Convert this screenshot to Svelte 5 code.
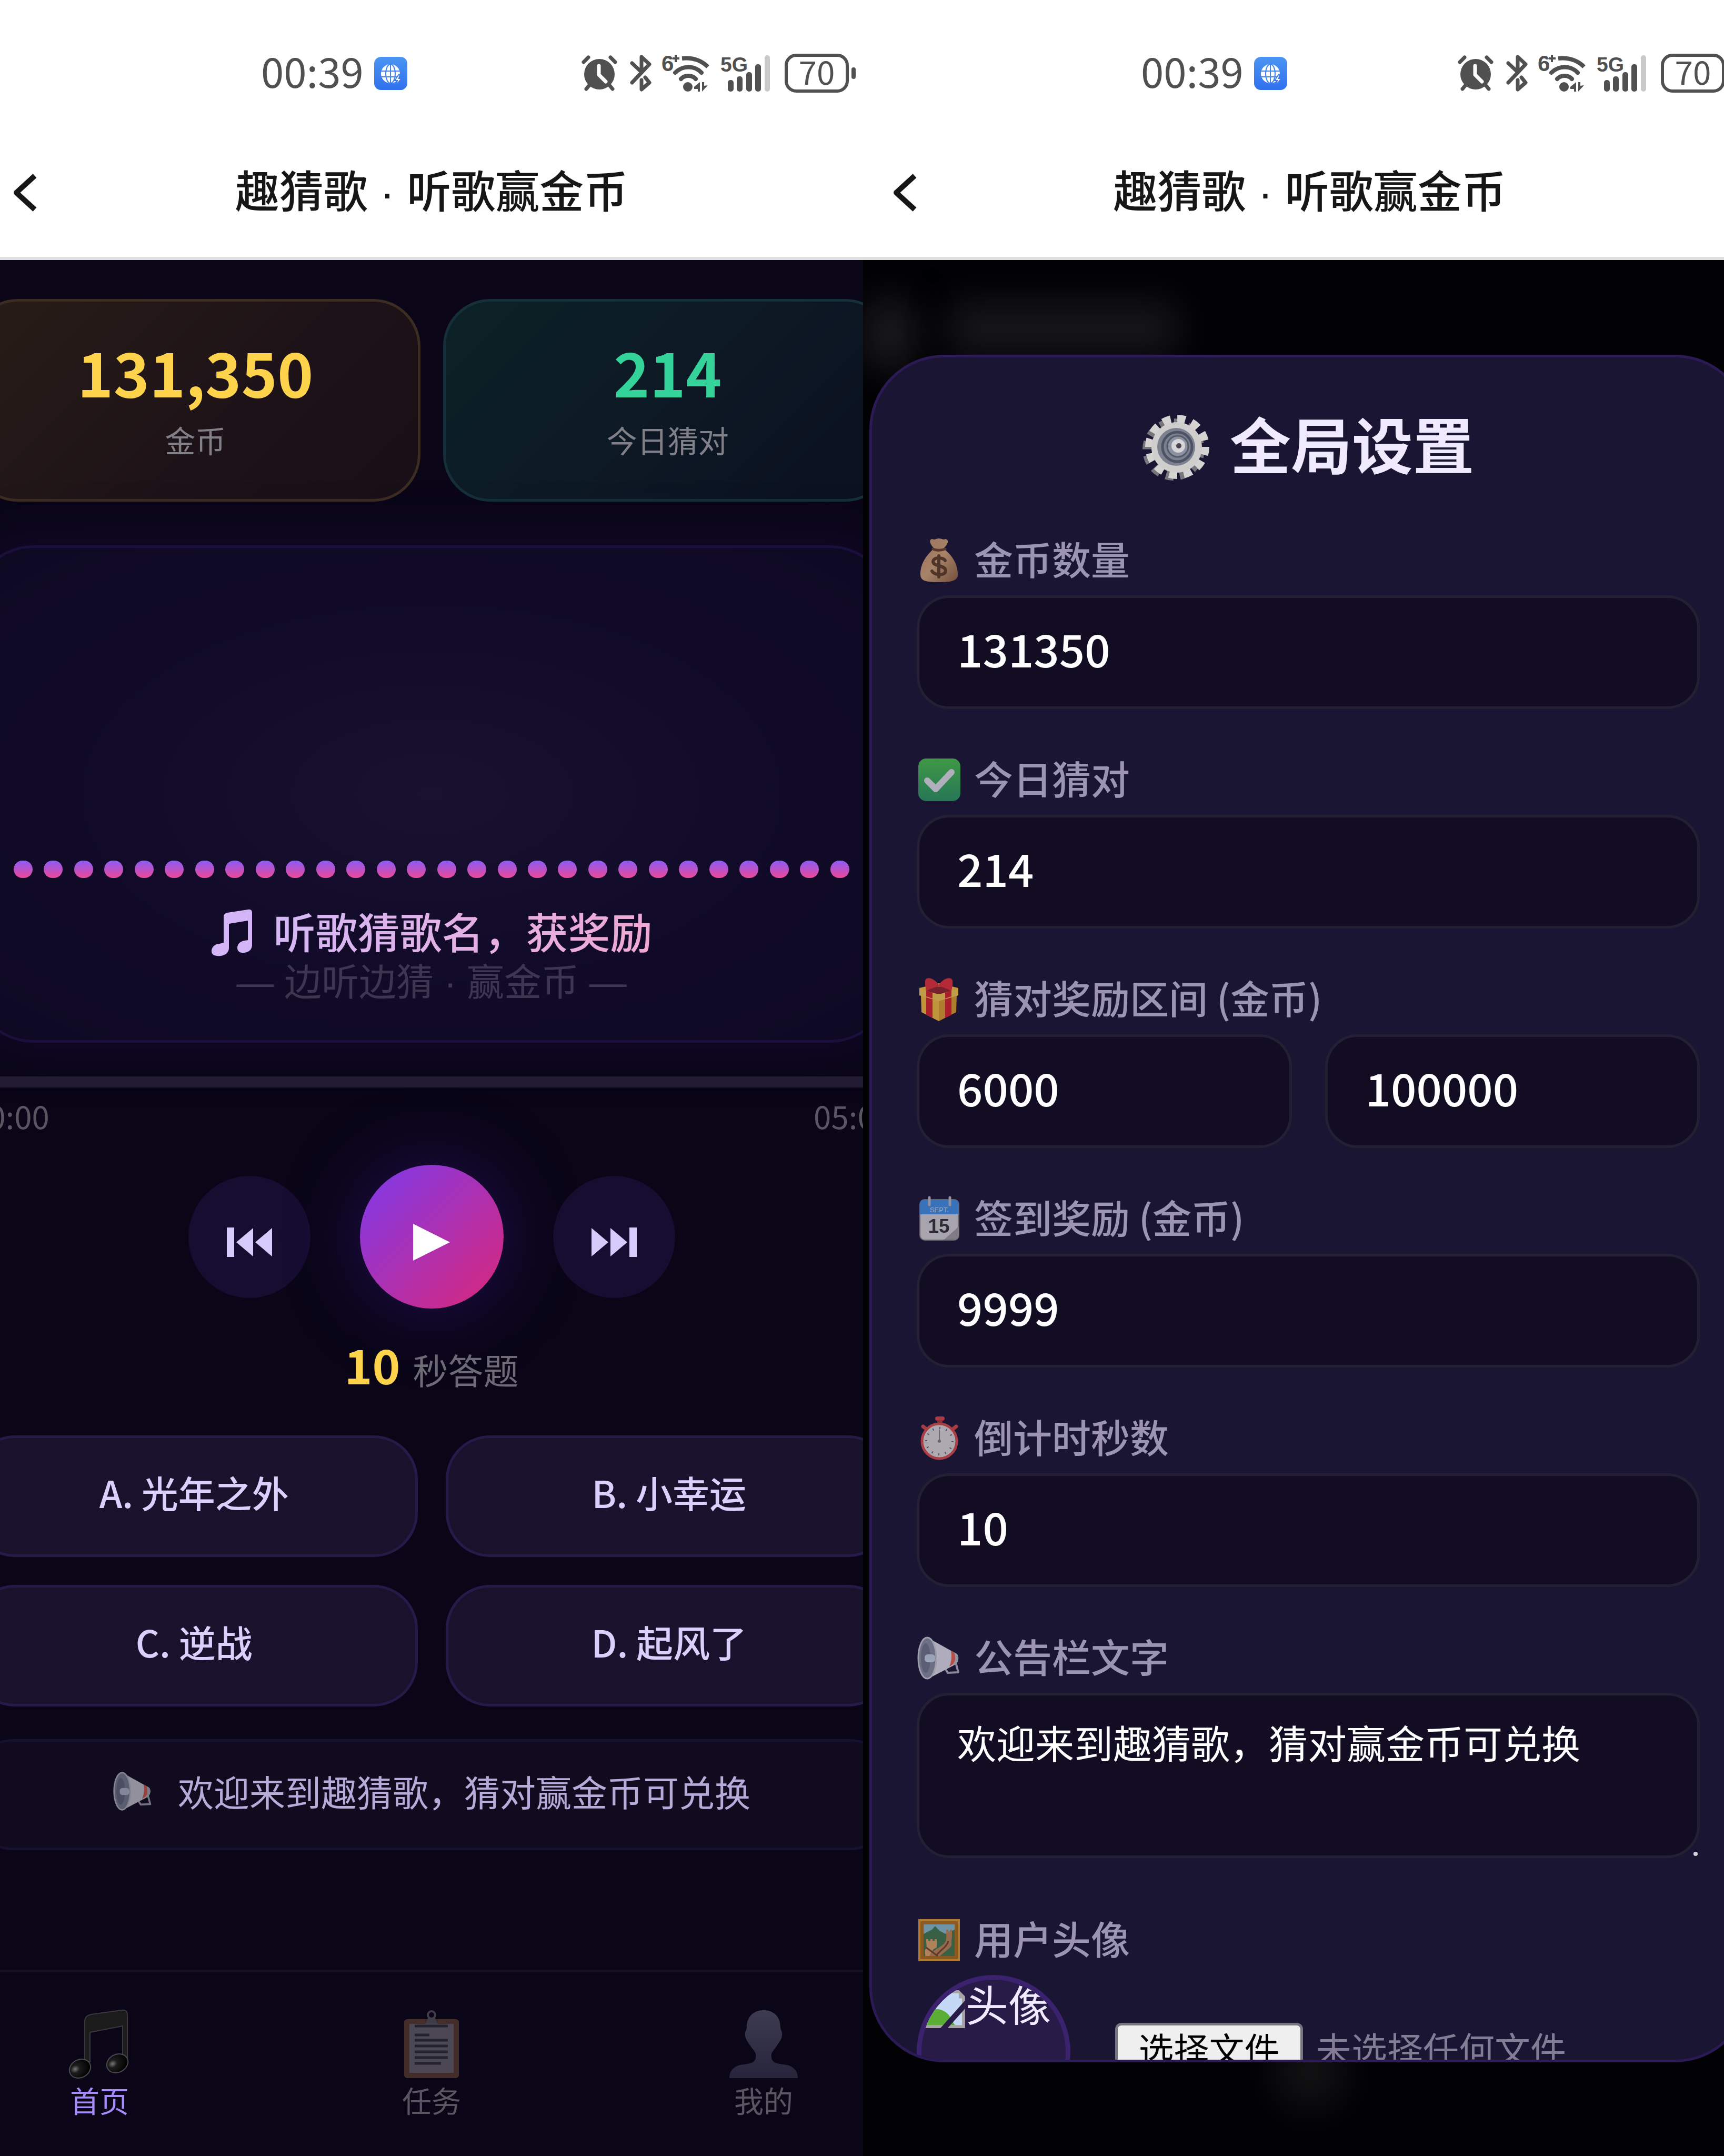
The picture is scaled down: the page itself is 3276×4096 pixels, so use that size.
<script>
  const options = ['A. 光年之外', 'B. 小幸运', 'C. 逆战', 'D. 起风了'];
  const dots = Array.from({ length: 28 });
  const tabs = [
    { id: 'home', label: '首页' },
    { id: 'task', label: '任务' },
    { id: 'me', label: '我的' }
  ];
  let active = $state('home');
  let coins = $state('131350');
  let guessed = $state('214');
  let rewardMin = $state('6000');
  let rewardMax = $state('100000');
  let signReward = $state('9999');
  let seconds = $state('10');
  let notice = $state('欢迎来到趣猜歌，猜对赢金币可兑换');
</script>

{#snippet phoneTop()}
  <div class="status">
    <span class="clock">00:39</span>
    <svg class="globe" viewBox="0 0 63 63" aria-hidden="true">
      <defs><linearGradient id="gl" x1="0" y1="0" x2="0" y2="1"><stop offset="0" stop-color="#4c95f3" /><stop offset="1" stop-color="#2f70ee" /></linearGradient></defs>
      <rect width="63" height="63" rx="13" fill="url(#gl)" />
      <circle cx="31" cy="32" r="18" fill="#fff" />
      <g fill="none" stroke="#3f83f0" stroke-width="2"><ellipse cx="31" cy="32" rx="9" ry="18" /><path d="M13 27h36M13 38h36M31 14v36" /></g>
      <path d="M47 33l-8 12h5l-2 8 10-12h-5l2-8z" fill="#fff" stroke="#3a7cf0" stroke-width="2" />
    </svg>
    <div class="signals">
      <svg class="alarm" viewBox="0 0 68 68" aria-hidden="true">
        <path d="M4 13L13 4M64 13L55 4" stroke="#505050" stroke-width="7" stroke-linecap="round" />
        <path d="M14 58l-5 6M54 58l5 6" stroke="#505050" stroke-width="7" stroke-linecap="round" />
        <circle cx="34" cy="36" r="29" fill="#505050" />
        <path d="M33 20v17l13 13" fill="none" stroke="#fff" stroke-width="7" stroke-linecap="round" stroke-linejoin="round" />
      </svg>
      <svg class="bt" viewBox="0 0 42 70" aria-hidden="true">
        <path d="M4 16l18 17M4 53L37 18 22 4v30M29 43l8 10-15 13V48" fill="none" stroke="#505050" stroke-width="7" stroke-linejoin="round" stroke-linecap="round" />
      </svg>
      <svg class="wifi" viewBox="0 0 92 74" aria-hidden="true">
        <text x="-2" y="33" font-size="42" font-weight="700" fill="#505050">6</text>
        <path d="M19 9h13M25 2v14" stroke="#505050" stroke-width="4" />
        <g fill="none" stroke="#505050" stroke-width="8"><path d="M37 9C58 7 74 13 86 25" stroke-linejoin="round" /><g stroke-linecap="round"><path d="M24 36C38 22 61 22 74 36" /><path d="M35 48C42 40 56 40 63 48" /></g></g>
        <circle cx="48" cy="63" r="9" fill="#505050" />
        <path d="M71 54v18h-4v-5h-7v-4zM75 54v18l11-12-7 1v-7z" fill="#505050" />
      </svg>
      <svg class="cell" viewBox="0 0 96 70" aria-hidden="true">
        <text x="-1" y="32" font-size="39" font-weight="700" fill="#505050">5G</text>
        <g fill="#505050"><rect x="13" y="48" width="11" height="22" rx="5" /><rect x="30" y="41" width="11" height="29" rx="5" /><rect x="48" y="33" width="11" height="37" rx="5" /><rect x="65" y="18" width="11" height="52" rx="5" /></g>
        <rect x="83" y="1" width="10" height="69" rx="5" fill="#c9c9c9" />
      </svg>
      <span class="battery">70</span>
      <span class="nub"></span>
      <svg class="bolt" viewBox="0 0 30 64" aria-hidden="true"><path d="M18 12L2 36h12l-4 22 18-28H16z" fill="#505050" /></svg>
    </div>
  </div>
  <header>
    <button class="back" aria-label="返回"><svg viewBox="0 0 48 76" aria-hidden="true"><path d="M42 6L7 38l35 32" fill="none" stroke="#161616" stroke-width="10" stroke-linejoin="round" /></svg></button>
    <h1>趣猜歌 · 听歌赢金币</h1>
  </header>
{/snippet}

{#snippet horn()}
  <svg viewBox="0 0 84 84" aria-hidden="true">
    <path d="M58 46l14-3 7 26-20 1-6-10" fill="none" stroke="#a9a8b5" stroke-width="4" stroke-linejoin="round" />
    <path d="M22 4L76 34c5 5 4 14-2 20L24 80z" fill="#d9d8e2" />
    <path d="M65 28l7 4c3 8 2 15-3 22l-7 4c4-9 5-20 3-30z" fill="#e0604e" />
    <path d="M71 31l5 3c5 5 4 14-2 20l-5 2c5-7 5-17 2-25z" fill="#b7b6c2" />
    <ellipse cx="20" cy="42" rx="17" ry="39" fill="#83899c" stroke="#c3c5d0" stroke-width="3" />
    <ellipse cx="17" cy="42" rx="9" ry="28" fill="#6d7388" />
    <rect x="15" y="35" width="20" height="15" rx="6" fill="#c0cbdc" />
  </svg>
{/snippet}

<main>
  <section class="phone left">
    <div class="top">{@render phoneTop()}</div>
    <div class="page">
      <div class="stats">
        <div class="stat gold"><strong>131,350</strong><span>金币</span></div>
        <div class="stat green"><strong>214</strong><span>今日猜对</span></div>
      </div>

      <div class="hero">
        <div class="wave">{#each dots as _}<i></i>{/each}</div>
        <div class="headline">
          <svg viewBox="0 0 78 88" aria-hidden="true"><path d="M24 14C24 9 27 7 31 6L70 0c5-1 8 1 8 6v61c0 9-6 14-15 15-8 1-13-3-13-9 0-8 6-13 14-14l6-1V21L34 27v46c0 8-6 14-16 15C7 89 1 86 1 79c0-8 7-14 15-14l8-2z" fill="#d4b5f7" /></svg>
          <h2>听歌猜歌名，获奖励</h2>
        </div>
        <p>— 边听边猜 · 赢金币 —</p>
      </div>

      <div class="progress" role="progressbar" aria-label="播放进度" aria-valuenow="0"></div>
      <div class="times"><span>00:00</span><span>05:00</span></div>

      <div class="controls">
        <button class="side" aria-label="上一首"><svg viewBox="0 0 86 56" aria-hidden="true"><path d="M0 0h14v56H0zM50 1v54L18 28zM86 1v54L54 28z" fill="#d6ccfb" /></svg></button>
        <button class="play" aria-label="播放"><svg viewBox="0 0 70 70" aria-hidden="true"><path d="M0 0l70 35L0 70z" fill="#fff" /></svg></button>
        <button class="side" aria-label="下一首"><svg viewBox="0 0 86 56" aria-hidden="true"><path d="M72 0h14v56H72zM36 1v54l32-27zM0 1v54l32-27z" fill="#d6ccfb" /></svg></button>
      </div>

      <p class="count"><b>10</b><span>秒答题</span></p>

      <div class="options">
        {#each options as option}<button>{option}</button>{/each}
      </div>

      <div class="notice">{@render horn()}<span>欢迎来到趣猜歌，猜对赢金币可兑换</span></div>
    </div>

    <nav>
      {#each tabs as tab}
        <button class:active={active === tab.id} onclick={() => (active = tab.id)}>
          {#if tab.id === 'home'}
            <svg viewBox="0 0 130 130" aria-hidden="true">
              <defs><radialGradient id="nh" cx=".3" cy=".4" r=".7"><stop offset="0" stop-color="#777" /><stop offset=".3" stop-color="#1c1c1c" /><stop offset="1" stop-color="#000" /></radialGradient></defs>
              <path d="M37 20c1-8 5-10 12-12l58-8c8-1 11 2 11 9v81h-9V30L47 42v56h-10z" fill="#1c1b1c" stroke="#39383c" stroke-width="2" />
              <ellipse cx="28" cy="111" rx="21" ry="17" transform="rotate(-28 28 111)" fill="url(#nh)" stroke="#4a4a4d" stroke-width="2" />
              <ellipse cx="99" cy="101" rx="21" ry="17" transform="rotate(-28 99 101)" fill="url(#nh)" stroke="#4a4a4d" stroke-width="2" />
            </svg>
          {:else if tab.id === 'task'}
            <svg viewBox="0 0 130 130" aria-hidden="true">
              <rect x="13" y="17" width="104" height="112" rx="6" fill="#432d2a" />
              <path d="M23 26h84v93H23z" fill="#4b4755" />
              <circle cx="65" cy="9" r="7" fill="none" stroke="#3f3d49" stroke-width="4" />
              <path d="M58 15h14l4 11H54z" fill="#3f3d49" />
              <path d="M33 30h63M33 47h28M33 57h63M33 68h63M33 79h63M33 90h63M33 101h50" stroke="#252230" stroke-width="5" />
            </svg>
          {:else}
            <svg viewBox="0 0 130 130" aria-hidden="true">
              <defs><linearGradient id="me" x1="0" y1="0" x2="0" y2="1"><stop offset="0" stop-color="#3d3b50" /><stop offset="1" stop-color="#27253c" /></linearGradient></defs>
              <path d="M65 0c20 0 32 13 32 33 0 4 4 7 3 15-1 9-6 13-10 20-6 9-12 12-10 22 2 14 18 11 33 15 13 5 17 14 17 24H0c0-10 4-19 17-24 15-4 31-1 33-15 2-10-4-13-10-22-4-7-9-11-10-20-1-8 3-11 3-15C33 13 45 0 65 0z" fill="url(#me)" />
            </svg>
          {/if}
          <span>{tab.label}</span>
        </button>
      {/each}
    </nav>
  </section>

  <section class="phone right">
    {@render phoneTop()}
    <div class="overlay">
      <i class="haze a"></i><i class="haze b"></i><i class="haze c"></i>
      <form class="panel">
        <h2>
          <svg viewBox="0 0 127 127" aria-hidden="true">
            <circle cx="59" cy="67" r="49" fill="none" stroke="#77767c" stroke-width="20" stroke-dasharray="14 11.7" />
            <circle cx="66" cy="62" r="52" fill="none" stroke="#d4d3d2" stroke-width="18" stroke-dasharray="15 12.2" />
            <circle cx="65" cy="63" r="48" fill="#cfcecd" />
            <circle cx="64" cy="62" r="36" fill="#7c8190" />
            <circle cx="66" cy="62" r="28" fill="none" stroke="#4d5364" stroke-width="5" />
            <circle cx="67" cy="61" r="20" fill="#8d92a2" stroke="#555a69" stroke-width="3" />
            <circle cx="68" cy="60" r="13" fill="#d6d6d8" />
            <circle cx="69" cy="60" r="5" fill="#45454d" />
          </svg>
          全局设置
        </h2>

        <div class="field">
          <label for="coins">
            <svg viewBox="0 0 84 84" aria-hidden="true">
              <defs><linearGradient id="bag" x1="0" y1="0" x2="1" y2="1"><stop offset="0" stop-color="#bd8d66" /><stop offset=".5" stop-color="#cfa278" /><stop offset="1" stop-color="#8c603e" /></linearGradient></defs>
              <path d="M33 19C24 9 23 2 29 1c6 2 8-1 13-1s8 3 13 1c7 2 5 9-4 18 15 12 27 28 27 49 0 12-10 15-36 15S7 80 7 68c0-21 12-37 26-49z" fill="url(#bag)" />
              <path d="M31 20c7 3 15 3 23 0" stroke="#68422b" stroke-width="5" fill="none" stroke-linecap="round" />
              <path d="M54 42c-3-6-22-8-23 2 0 10 24 6 24 17 0 11-22 9-26 1M42 33v40" stroke="#5e3d25" stroke-width="6" fill="none" stroke-linecap="round" />
            </svg>
            金币数量
          </label>
          <input id="coins" type="text" inputmode="numeric" bind:value={coins} />
        </div>

        <div class="field">
          <label for="guessed">
            <svg viewBox="0 0 84 84" aria-hidden="true">
              <defs><linearGradient id="ok" x1="0" y1="0" x2="0" y2="1"><stop offset="0" stop-color="#4bbd4b" /><stop offset="1" stop-color="#2a9360" /></linearGradient></defs>
              <rect x="3" y="1" width="80" height="81" rx="15" fill="url(#ok)" />
              <path d="M20 43l16 16 30-32" stroke="#dbdbe3" stroke-width="12" fill="none" stroke-linecap="round" stroke-linejoin="round" />
            </svg>
            今日猜对
          </label>
          <input id="guessed" type="text" inputmode="numeric" bind:value={guessed} />
        </div>

        <div class="field">
          <label for="rmin">
            <svg viewBox="0 0 84 84" aria-hidden="true">
              <path d="M5 20l37-9 37 9v14H5z" fill="#f0bd42" />
              <path d="M8 33l34 9v41L9 66z" fill="#eeb83e" />
              <path d="M76 33l-34 9v41l33-17z" fill="#d99b2d" />
              <path d="M18 36l12 4v37l-12-6zM54 40l12-4v35l-12 6z" fill="#d5222c" />
              <path d="M42 14C32 0 18-2 16 6c-1 8 1 13 2 20 8-1 16-4 24-10 8 6 16 9 24 10 1-7 3-12 2-20-2-8-16-6-26 8z" fill="#df3038" />
              <path d="M20 25c7-4 14-7 22-8 8 1 15 4 22 8l-2 6H22z" fill="#92242d" />
              <path d="M5 22l37 10 37-10v12L42 45 5 34z" fill="#f2c450" />
              <path d="M18 25l12 4v11l-12-4zM54 29l12-4v11l-12 4z" fill="#d5222c" />
            </svg>
            猜对奖励区间 (金币)
          </label>
          <div class="pair">
            <input id="rmin" type="text" inputmode="numeric" aria-label="最低奖励" bind:value={rewardMin} />
            <input type="text" inputmode="numeric" aria-label="最高奖励" bind:value={rewardMax} />
          </div>
        </div>

        <div class="field">
          <label for="sign">
            <svg viewBox="0 0 84 84" aria-hidden="true">
              <rect x="6" y="5" width="74" height="77" rx="9" fill="#cfcdd1" stroke="#79757b" stroke-width="2" />
              <path d="M6 33V14q0-9 9-9h56q9 0 9 9v19z" fill="#3f8be0" />
              <text x="43" y="29" text-anchor="middle" font-size="13" fill="#c3d6ee">SEPT.</text>
              <path d="M80 56L52 81h19q9 0 9-9z" fill="#9c9a9f" />
              <text x="42" y="68" text-anchor="middle" font-size="37" font-weight="700" fill="#333">15</text>
              <path d="M24 1v14M63 1v14" stroke="#b6b6bd" stroke-width="5" stroke-linecap="round" />
            </svg>
            签到奖励 (金币)
          </label>
          <input id="sign" type="text" inputmode="numeric" bind:value={signReward} />
        </div>

        <div class="field">
          <label for="secs">
            <svg viewBox="0 0 84 84" aria-hidden="true">
              <rect x="35" y="0" width="18" height="8" rx="4" fill="#d94444" /><path d="M39 7h10v8H39z" fill="#a33a3d" />
              <path d="M12 19l9 7M75 19l-9 7" stroke="#cf4748" stroke-width="7" stroke-linecap="round" />
              <circle cx="43" cy="47" r="33" fill="#d8d2d4" stroke="#d34a4b" stroke-width="5" />
              <circle cx="43" cy="47" r="25" fill="none" stroke="#67616c" stroke-width="4" stroke-dasharray="2 11" />
              <path d="M43 25v24" stroke="#817b86" stroke-width="2" />
              <circle cx="43" cy="47" r="3" fill="#817b86" />
            </svg>
            倒计时秒数
          </label>
          <input id="secs" type="text" inputmode="numeric" bind:value={seconds} />
        </div>

        <div class="field">
          <label for="notice">{@render horn()}公告栏文字</label>
          <div class="area">
            <textarea id="notice" bind:value={notice}></textarea>
            <i class="grip"></i>
          </div>
        </div>

        <div class="field">
          <label for="avatar">
            <svg viewBox="0 0 84 84" aria-hidden="true">
              <rect x="3" y="2" width="79" height="80" fill="#a86d1c" />
              <rect x="5" y="4" width="75" height="76" fill="none" stroke="#dc9a30" stroke-width="4" />
              <rect x="13" y="12" width="59" height="60" fill="#86b9c8" />
              <path d="M13 30l16-8 6-7 8 9 12 6 17-8v50H13z" fill="#42764a" />
              <path d="M56 22h4v3h3v-3h4v14c-3 14 3 14-6 22L44 72H24c6-12 24-17 30-26 3-5 2-10 2-24z" fill="#b98254" />
              <path d="M18 44v-4h4v3h4v-3h4v3h4v-3h4v16l-6 3-8 13h-8V60l3-3z" fill="#dba064" />
              <path d="M18 56l22 16M60 44C58 54 46 60 38 70" fill="none" stroke="#75422c" stroke-width="3" />
            </svg>
            用户头像
          </label>
          <div class="upload">
            <div class="avatar" role="img" aria-label="头像">
              <svg viewBox="0 0 84 74" aria-hidden="true"><path d="M0 0h72l12 12v62H0z" fill="#a7a3a6" /><path d="M6 6h66v10h6v52H6z" fill="#c5d8f5" /><path d="M6 68V48c14-15 32-14 46 0l12 20z" fill="#5aae35" /><path d="M84 20L36 74h14l34-38z" fill="#291b47" /></svg>
              <span>头像</span>
            </div>
            <label class="file" for="avatar">选择文件</label>
            <input id="avatar" class="hidden" type="file" />
            <span class="none">未选择任何文件</span>
          </div>
        </div>
      </form>
    </div>
  </section>
</main>

<style>
  :global(body) { margin: 0; background: #020205; }
  * { box-sizing: border-box; }
  main { display: grid; grid-template-columns: 1640fr 1636fr; height: 100vh; overflow: hidden; font-family: "Noto Sans CJK SC", "Noto Sans", sans-serif; }
  h1, h2, p { margin: 0; }
  button, input, textarea { font: inherit; color: inherit; border: 0; background: none; padding: 0; margin: 0; outline: none; }
  svg { display: block; flex: none; overflow: visible; }
  .phone { min-width: 0; height: 100vh; display: flex; flex-direction: column; }
  .left { overflow: hidden; background: #0a0618; }
  .left .top { margin: 0 -32px; }
  .right { margin-right: -61px; background: #020205; }

  .status { height: 278px; padding-left: 528px; background: #fff; display: flex; align-items: center; color: #505050; }
  .clock { font-size: 78px; line-height: 90px; margin-bottom: 12px; }
  .globe { width: 63px; height: 63px; margin-left: 20px; }
  .signals { display: flex; align-items: center; margin-left: auto; }
  .alarm { width: 68px; height: 68px; margin-right: 24px; }
  .bt { width: 42px; height: 70px; margin-right: 20px; }
  .wifi { width: 92px; height: 74px; margin-right: 19px; }
  .cell { width: 96px; height: 70px; margin-right: 25px; }
  .wifi text, .cell text { font-family: "Liberation Sans", sans-serif; }
  .battery { width: 122px; height: 74px; border: 6px solid #505050; border-radius: 22px; font-size: 62px; line-height: 52px; text-align: center; }
  .nub { width: 8px; height: 22px; margin: 0 14px 0 5px; border-radius: 4px; background: #505050; }
  .bolt { width: 30px; height: 64px; margin-right: 2px; }
  header { height: 216px; border-bottom: 6px solid #e0e0e0; background: #fff; display: grid; grid-template-columns: 140px 1fr 140px; align-items: center; padding-bottom: 34px; }
  .back { padding-left: 56px; }
  .back svg { width: 48px; height: 76px; }
  h1 { font-family: "Liberation Sans", "Noto Sans CJK SC", sans-serif; font-size: 84px; line-height: 110px; font-weight: 500; text-align: center; color: #161616; white-space: nowrap; }

  .page { margin: 0 -56px; padding-top: 74px; display: flex; flex-direction: column; }
  .stats { display: grid; grid-template-columns: 1fr 1fr; gap: 43px; }
  .stat { border: 5px solid; border-radius: 90px; padding: 61px 0 73px; display: flex; flex-direction: column; align-items: center; gap: 21px; }
  .stat strong { font-size: 116px; line-height: 140px; font-weight: 700; }
  .stat span { font-size: 58px; line-height: 80px; color: #817f88; }
  .gold { border-color: #3d2c22; background: linear-gradient(135deg, #291d18, #1d1217 60%, #190f16); }
  .gold strong { color: #fdd34c; }
  .green { border-color: #15303a; background: linear-gradient(135deg, #0c2226, #0d1724 60%, #0a1020); }
  .green strong { color: #34d399; }

  .hero { margin-top: 83px; border: 5px solid #1b103b; border-radius: 120px; padding: 0 77px 64px; display: flex; flex-direction: column; background: radial-gradient(ellipse at 50% 50%, #18112f, #110b29 50%, #0e0923); box-shadow: 0 0 100px #160a2e; }
  .wave { height: 627px; display: flex; justify-content: space-between; align-items: flex-end; }
  .wave i { width: 36px; height: 33px; border-radius: 18px; background: linear-gradient(#8b5cf6, #ec4899); }
  .headline { margin-top: 44px; display: flex; justify-content: center; align-items: center; gap: 41px; }
  .headline svg { width: 78px; height: 88px; margin-top: 10px; }
  .headline h2 { font-size: 80px; line-height: 110px; font-weight: 500; background: linear-gradient(90deg, #d5b8f7, #f0a8d2); background-clip: text; color: transparent; }
  .hero p { font-family: "Liberation Sans", "Noto Sans CJK SC", sans-serif; font-size: 71px; line-height: 90px; text-align: center; color: #3d3650; }

  .progress { margin-top: 64px; height: 21px; border-radius: 10px; background: #221c33; }
  .times { margin-top: 13px; display: flex; justify-content: space-between; font-size: 60px; line-height: 80px; color: #595661; }
  .controls { margin-top: 54px; display: flex; justify-content: center; align-items: center; gap: 94px; }
  .controls button { border-radius: 50%; display: grid; place-items: center; padding-top: 20px; }
  .side { width: 232px; height: 232px; background: #170d31; }
  .side svg { width: 86px; height: 56px; }
  .play { width: 273px; height: 273px; background: linear-gradient(135deg, #7c3aed, #db2777); box-shadow: 0 0 130px #220d50; }
  .play svg { width: 70px; height: 70px; }
  .count { margin-top: 40px; display: flex; justify-content: center; align-items: baseline; gap: 24px; line-height: 130px; color: #6e6b77; font-size: 67px; }
  .count b { font-size: 90px; color: #fdd34c; }
  .options { margin-top: 61px; display: grid; grid-template-columns: 1fr 1fr; gap: 53px; }
  .options button { border: 5px solid #251a48; border-radius: 84px; padding: 58px 0 73px; background: #19122d; color: #d9d0fb; font-size: 70px; line-height: 90px; font-weight: 500; }
  .notice { margin-top: 62px; border: 5px solid #171130; border-radius: 80px; padding: 49px 0 62px; display: flex; justify-content: center; align-items: center; gap: 48px; background: #100b1f; color: #b6abd9; font-size: 68px; line-height: 90px; }
  .notice svg { width: 76px; height: 76px; opacity: 0.65; }

  nav { margin-top: auto; border-top: 5px solid #15101f; padding: 72px 124px 67px; display: flex; justify-content: space-between; }
  nav button { display: flex; flex-direction: column; align-items: center; font-size: 56px; line-height: 80px; color: #595661; }
  nav svg { width: 130px; height: 130px; }
  nav .active { color: #a78bfa; }

  .overlay { position: relative; flex: 1; min-height: 0; padding: 180px 12px 178px; overflow: hidden; }
  .haze { position: absolute; border-radius: 50%; filter: blur(34px); background: #1c1c1f; }
  .a { left: 0; top: 70px; width: 100px; height: 140px; }
  .b { left: 160px; top: 80px; width: 440px; height: 100px; border-radius: 30px; background: #17171b; }
  .c { left: 780px; bottom: 90px; width: 140px; height: 140px; background: #121214; }
  .panel { position: relative; height: 100%; overflow: hidden; border: 5px solid #2c1a56; border-radius: 142px; padding: 86px 90px 0 85px; background: #1b1534; }
  .panel h2 { display: flex; justify-content: center; align-items: center; gap: 39px; margin-bottom: 92px; font-size: 116px; line-height: 150px; font-weight: 700; color: #f0eaff; }
  .panel h2 svg { width: 127px; height: 127px; margin-top: 20px; }
  .field { margin-bottom: 77px; }
  .field > label { display: flex; align-items: center; gap: 25px; margin-bottom: 18px; font-size: 74px; line-height: 106px; font-weight: 500; color: #9c94b3; white-space: nowrap; }
  .field > label svg { width: 84px; height: 84px; margin-top: 10px; opacity: 0.78; }
  .field > label text { font-family: "Liberation Sans", sans-serif; }
  .field input[type='text'] { display: block; width: 100%; border: 5px solid #242034; border-radius: 62px; padding: 41px 72px 59px; background: #120d22; color: #fff; font-size: 85px; line-height: 106px; font-weight: 500; height: 216px; }
  .pair { display: grid; grid-template-columns: 1fr 1fr; gap: 63px; }
  .area { position: relative; margin-bottom: 98px; }
  textarea { display: block; width: 100%; height: 314px; border: 5px solid #242034 !important; border-radius: 62px; padding: 40px 72px; background: #120d22; color: #fff; font-size: 74px; line-height: 96px; resize: none; overflow: hidden; }
  .grip { position: absolute; right: 4px; bottom: 4px; width: 8px; height: 8px; border-radius: 4px; background: #d5d3da; }
  .upload { display: flex; align-items: center; }
  .avatar { width: 292px; height: 292px; flex: none; border: 9px solid #3b226f; border-radius: 50%; overflow: hidden; background: #291b47; display: flex; align-items: flex-start; color: #f0eaff; font-size: 81px; line-height: 88px; white-space: nowrap; }
  .avatar svg { width: 84px; height: 72px; margin-top: 20px; }
  .file { margin-left: 85px; width: 357px; height: 110px; border: 5px solid #77737f; border-radius: 12px; background: #efefef; color: #000; font-size: 67px; line-height: 86px; text-align: center; white-space: nowrap; }
  .hidden { position: absolute; width: 1px; height: 1px; opacity: 0; }
  .none { margin: 0 0 14px 24px; font-size: 68px; line-height: 96px; color: #827c94; white-space: nowrap; }
</style>
